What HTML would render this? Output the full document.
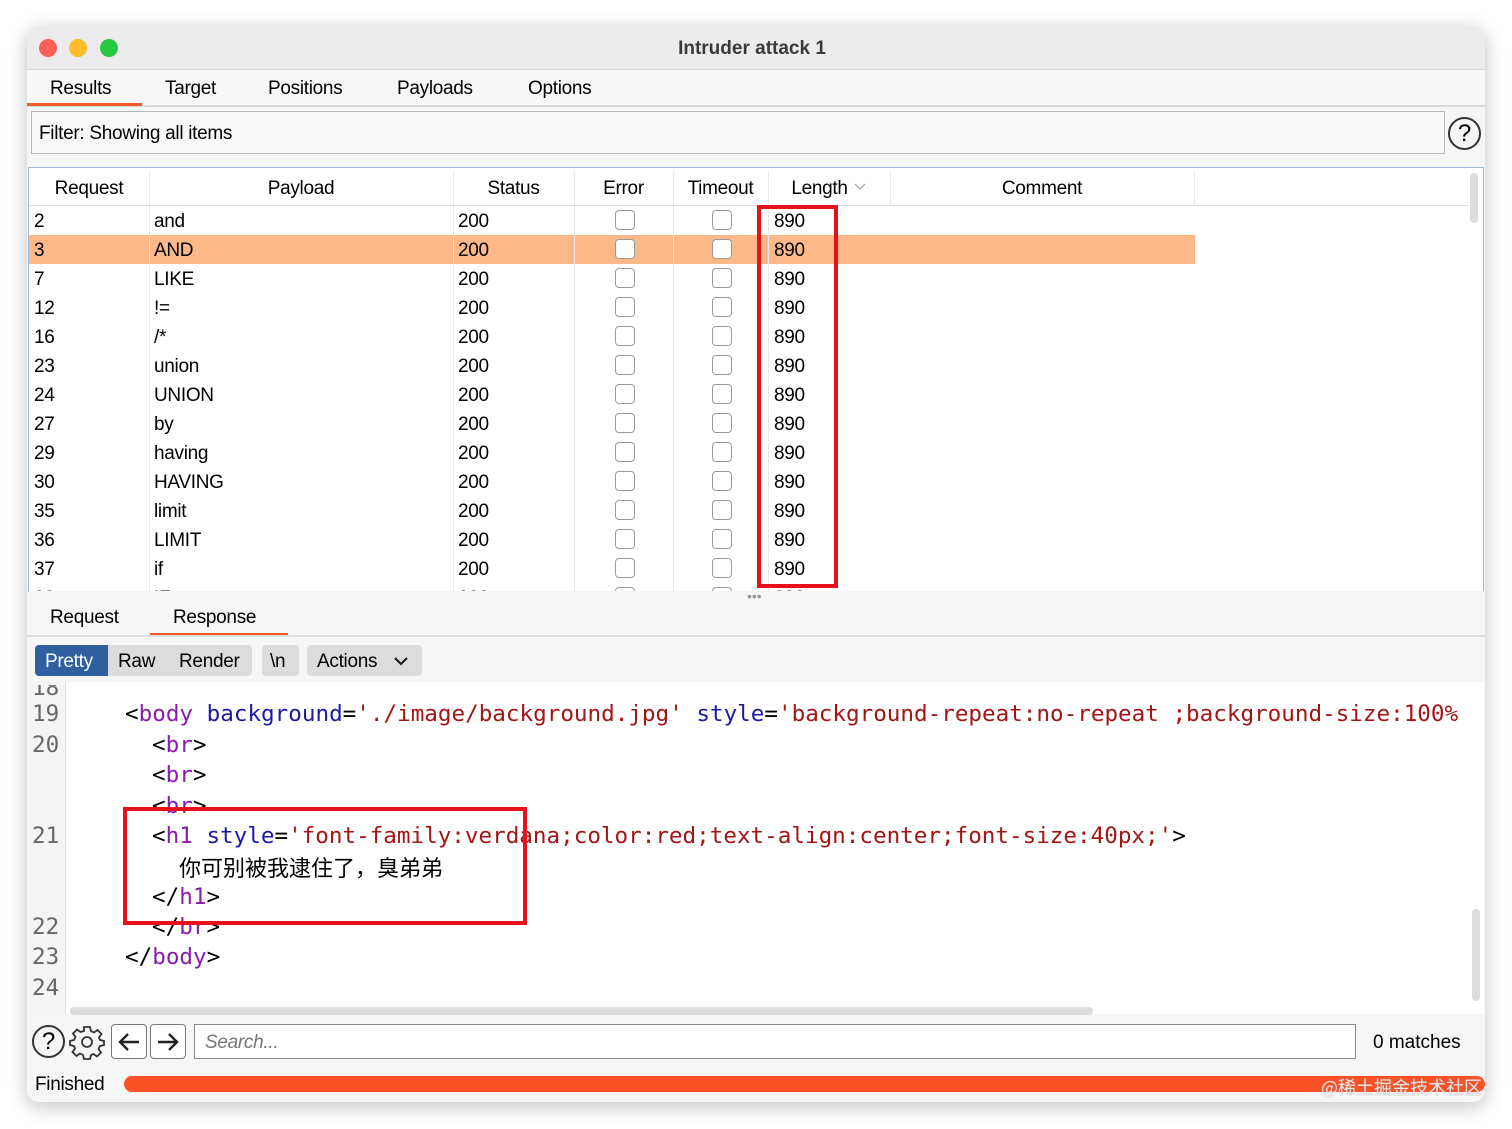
<!DOCTYPE html>
<html><head><meta charset="utf-8"><style>
*{margin:0;padding:0;box-sizing:border-box}
body{width:1512px;height:1129px;background:#fff;font-family:"Liberation Sans",sans-serif;position:relative;overflow:hidden;color:#000}
.a{position:absolute;white-space:nowrap}
.win{position:absolute;left:27px;top:27px;width:1458px;height:1075px;border-radius:12px;background:#f6f6f6;box-shadow:0 4px 20px rgba(0,0,0,.25);overflow:hidden}
.t{font-size:19px;letter-spacing:-.3px}
.cb{position:absolute;width:20px;height:20px;border:1.5px solid #9a9a9a;border-radius:4px;background:#fff}
.code{font-family:"DejaVu Sans Mono","Liberation Mono","Noto Sans CJK SC",monospace;font-size:22.6px;letter-spacing:0px}
.p{color:#8a1bb0}.b{color:#1a1aa6}.r{color:#a31515}
.ln{color:#666;font-family:"DejaVu Sans Mono",monospace;font-size:22.6px}
</style></head><body>
<div class="win">
 <div class="a" style="left:0;top:0;width:1458px;height:43px;background:#ececec;border-bottom:1px solid #d6d6d6"></div>
 <div class="a" style="left:12px;top:12px;width:18px;height:18px;border-radius:50%;background:#fe5f57"></div>
 <div class="a" style="left:42px;top:12px;width:18px;height:18px;border-radius:50%;background:#febc2e"></div>
 <div class="a" style="left:73px;top:12px;width:18px;height:18px;border-radius:50%;background:#28c840"></div>
 <div class="a" style="left:-4px;width:1458px;top:11px;text-align:center;font-size:19px;font-weight:bold;color:#3a3a3a">Intruder attack 1</div>
 <div class="a" style="left:0;top:44px;width:1458px;height:36px;background:#f7f7f7;border-bottom:2px solid #d8d8d8"></div>
 <div class="a t" style="left:23px;top:51px">Results</div>
 <div class="a" style="left:0;top:76px;width:115px;height:3px;background:#ef5a2a"></div>
 <div class="a t" style="left:138px;top:51px">Target</div>
 <div class="a t" style="left:241px;top:51px">Positions</div>
 <div class="a t" style="left:370px;top:51px">Payloads</div>
 <div class="a t" style="left:501px;top:51px">Options</div>
 <div class="a" style="left:4px;top:84px;width:1414px;height:43px;border:1.5px solid #b8b8b8;background:#f8f8f8"></div>
 <div class="a t" style="left:12px;top:96px">Filter: Showing all items</div>
 <div class="a" style="left:1421px;top:90px;width:33px;height:33px;border:2px solid #333;border-radius:50%;text-align:center;font-size:24px;line-height:29px">?</div>
 <div class="a" style="left:1px;top:140px;width:1456px;height:425px;background:#fff;border:1.5px solid #9fb8d6"></div>
 <div class="a" style="left:2px;top:142px;width:1440px;height:37px;border-bottom:1.5px solid #ddd"></div>
 <div class="a" style="left:2px;top:208px;width:1166px;height:29px;background:#fdb88a"></div>
 <div class="a" style="left:1443px;top:146px;width:8px;height:50px;border-radius:4px;background:#ddd"></div>
 <div id="tbl"></div>
 <div class="a t" style="left:23px;top:580px">Request</div>
 <div class="a t" style="left:146px;top:580px">Response</div>
 <div class="a" style="left:123px;top:606px;width:138px;height:3px;background:#ef5a2a"></div>
 <div class="a" style="left:0;top:608px;width:1458px;height:2px;background:#ddd"></div>
 <div class="a" style="left:720px;top:561px;color:#999;font-size:14px">•••</div>
 <div class="a" style="left:8px;top:618px;width:217px;height:31px;border-radius:4px;background:#dcdcdc"></div>
 <div class="a" style="left:8px;top:618px;width:73px;height:31px;border-radius:4px 0 0 4px;background:#2f5f9e"></div>
 <div class="a t" style="left:18px;top:624px;color:#fff">Pretty</div>
 <div class="a t" style="left:91px;top:624px">Raw</div>
 <div class="a t" style="left:152px;top:624px">Render</div>
 <div class="a" style="left:235px;top:618px;width:37px;height:31px;border-radius:4px;background:#dcdcdc"></div>
 <div class="a t" style="left:243px;top:624px">\n</div>
 <div class="a" style="left:280px;top:618px;width:115px;height:31px;border-radius:4px;background:#dcdcdc"></div>
 <div class="a t" style="left:290px;top:624px">Actions</div>
 <svg class="a" style="left:366px;top:628px" width="16" height="12"><path d="M2 3l6 6 6-6" stroke="#222" stroke-width="2.2" fill="none"/></svg>
 <div class="a" style="left:0;top:655px;width:1458px;height:332px;background:#fff"></div>
 <div class="a" style="left:0;top:655px;width:39px;height:332px;background:#f4f4f4;border-right:1px solid #e3e3e3"></div>
 <div class="a ln" style="left:5px;top:648px;clip-path:inset(10px 0 0 0)">18</div>
 <div class="a ln" style="left:5px;top:674px">19</div>
 <div class="a ln" style="left:5px;top:705px">20</div>
 <div class="a ln" style="left:5px;top:796px">21</div>
 <div class="a ln" style="left:5px;top:887px">22</div>
 <div class="a ln" style="left:5px;top:917px">23</div>
 <div class="a ln" style="left:5px;top:948px">24</div>
 <div class="a code" style="left:98px;top:674px">&lt;<span class="p">body</span> <span class="b">background</span>=<span class="r">'./image/background.jpg'</span> <span class="b">style</span>=<span class="r">'background-repeat:no-repeat ;background-size:100%</span></div>
 <div class="a code" style="left:125px;top:705px">&lt;<span class="p">br</span>&gt;</div>
 <div class="a code" style="left:125px;top:735px">&lt;<span class="p">br</span>&gt;</div>
 <div class="a code" style="left:125px;top:766px">&lt;<span class="p">br</span>&gt;</div>
 <div class="a code" style="left:125px;top:796px">&lt;<span class="p">h1</span> <span class="b">style</span>=<span class="r">'font-family:verdana;color:red;text-align:center;font-size:40px;'</span>&gt;</div>
 <div class="a" style="left:152px;top:824px;font-family:'Noto Sans CJK SC',sans-serif;font-size:22px">你可别被我逮住了，臭弟弟</div>
 <div class="a code" style="left:125px;top:857px">&lt;/<span class="p">h1</span>&gt;</div>
 <div class="a code" style="left:125px;top:887px">&lt;/<span class="p">br</span>&gt;</div>
 <div class="a code" style="left:98px;top:917px">&lt;/<span class="p">body</span>&gt;</div>
 <div class="a" style="left:96px;top:780px;width:404px;height:118px;border:4px solid #e8101a"></div>
 <div class="a" style="left:43px;top:980px;width:1023px;height:8px;border-radius:4px;background:#ddd"></div>
 <div class="a" style="left:1445px;top:882px;width:8px;height:92px;border-radius:4px;background:#ddd"></div>
 <div class="a" style="left:5px;top:998px;width:33px;height:33px;border:2px solid #333;border-radius:50%;text-align:center;font-size:24px;line-height:29px">?</div>
 <svg class="a" style="left:42px;top:997px" width="36" height="36" viewBox="0 0 36 36"><g stroke="#333" stroke-width="1.8" fill="none"><circle cx="18" cy="18" r="5"/><path d="M15 3h6l1 4 3 1.5 3.5-2.5 4 4-2.5 3.5L31 16l4 1v4l-4 1-1.5 3 2.5 3.5-4 4-3.5-2.5L22 31l-1 4h-6l-1-4-3-1.5-3.5 2.5-4-4 2.5-3.5L5 22l-4-1v-4l4-1 1.5-3L4 9.5l4-4L11.5 8 15 7z"/></g></svg>
 <div class="a" style="left:84px;top:997px;width:36px;height:35px;border:1.5px solid #777;border-radius:4px;background:#fff"></div>
 <svg class="a" style="left:88px;top:1003px" width="28" height="24"><path d="M24 12H5M13 4l-8 8 8 8" stroke="#222" stroke-width="2.4" fill="none"/></svg>
 <div class="a" style="left:123px;top:997px;width:36px;height:35px;border:1.5px solid #777;border-radius:4px;background:#fff"></div>
 <svg class="a" style="left:127px;top:1003px" width="28" height="24"><path d="M4 12h19M15 4l8 8-8 8" stroke="#222" stroke-width="2.4" fill="none"/></svg>
 <div class="a" style="left:167px;top:997px;width:1162px;height:35px;border:1.5px solid #888;background:#fff"></div>
 <div class="a t" style="left:178px;top:1005px;font-style:italic;color:#777">Search...</div>
 <div class="a t" style="left:1346px;top:1005px;letter-spacing:0">0 matches</div>
 <div class="a t" style="left:8px;top:1047px">Finished</div>
 <div class="a" style="left:97px;top:1049px;width:1361px;height:16px;border-radius:8px;background:#fc5127"></div>
 <div class="a" style="left:1294px;top:1047px;font-family:'Noto Sans CJK SC',sans-serif;font-size:18px;color:rgba(255,255,255,.8);text-shadow:0 0 1px #888">@稀土掘金技术社区</div>
</div>
<script>
var cols=[[2,120,'Request'],[122,304,'Payload'],[426,121,'Status'],[547,99,'Error'],[646,95,'Timeout'],[741,122,'Length'],[863,304,'Comment']];
var h='';
cols.forEach(function(c,i){h+='<div class="a t" style="left:'+c[0]+'px;top:151px;width:'+c[1]+'px;text-align:center">'+c[2]+(i==5?' <svg width="14" height="10" style="vertical-align:2px"><path d="M2 2l5 5 5-5" stroke="#aaa" stroke-width="1.3" fill="none"/></svg>':'')+'</div>';
if(i>0)h+='<div class="a" style="left:'+c[0]+'px;top:144px;width:1px;height:'+(i==6?35:420)+'px;background:#e8e8e8"></div>';});
h+='<div class="a" style="left:1167px;top:144px;width:1px;height:35px;background:#e8e8e8"></div>';
var rows=[['2','and'],['3','AND'],['7','LIKE'],['12','!='],['16','/*'],['23','union'],['24','UNION'],['27','by'],['29','having'],['30','HAVING'],['35','limit'],['36','LIMIT'],['37','if'],['38','IF']];
rows.forEach(function(r,i){var y=184+i*29;
h+='<div class="a t" style="left:7px;top:'+y+'px">'+r[0]+'</div><div class="a t" style="left:127px;top:'+y+'px">'+r[1]+'</div><div class="a t" style="left:431px;top:'+y+'px">200</div><div class="a t" style="left:747px;top:'+y+'px">890</div>';
h+='<div class="cb" style="left:588px;top:'+(y-1)+'px"></div><div class="cb" style="left:685px;top:'+(y-1)+'px"></div>';});
h+='<div class="a" style="left:2px;top:564px;width:1456px;height:30px;background:#f6f6f6"></div>';
h+='<div class="a" style="left:730px;top:178px;width:81px;height:383px;border:4px solid #e8101a"></div>';
document.getElementById('tbl').innerHTML=h;
</script>
</body></html>
